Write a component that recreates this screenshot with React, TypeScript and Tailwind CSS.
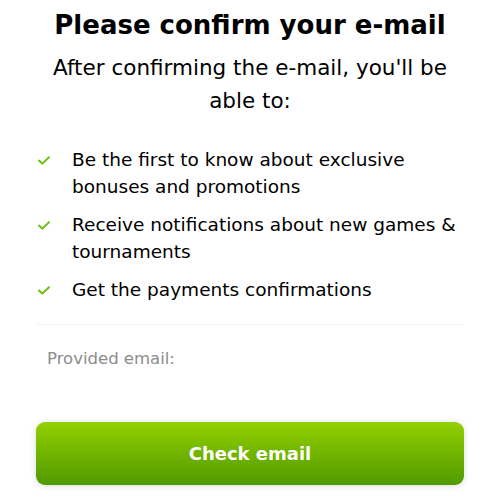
import React from 'react';

const items = [
  'Be the first to know about exclusive bonuses and promotions',
  'Receive notifications about new games & tournaments',
  'Get the payments confirmations',
];

const Check: React.FC = () => (
  <svg width="12" height="9" viewBox="0 0 12 9" className="shrink-0 mt-[10px]">
    <path d="M1 4.6 L4.3 7.6 L11 1.2" fill="none" stroke="#6cc20e" strokeWidth="2" strokeLinecap="round" strokeLinejoin="round" />
  </svg>
);

const App: React.FC = () => {
  return (
    <div className="w-[500px] h-[499px] bg-white px-9 pt-[8px] font-['DejaVu_Sans',sans-serif] text-black overflow-hidden">
      <h1 className="text-center text-[26px] leading-[34px] font-bold">Please confirm your e-mail</h1>
      <p className="mx-auto w-[410px] text-center text-[21.5px] leading-[33px] mt-[9px]">
        After confirming the e-mail, you'll be able to:
      </p>
      <ul className="mt-[29px] flex flex-col gap-[11px]">
        {items.map(text => (
          <li key={text} className="flex gap-[22px] pl-[2px] text-[18.5px] leading-[27px]">
            <Check />
            <span>{text}</span>
          </li>
        ))}
      </ul>
      <div className="mt-[21px] border-t border-gray-100" />
      <div className="mt-[22px] pl-[11px] text-[16.5px] text-[#8c8c8c]">Provided email:</div>
      <button className="mt-[50px] w-full h-[63px] rounded-[9px] bg-gradient-to-b from-[#93d000] to-[#4f9a00] text-white text-[18px] font-bold shadow-[0_1px_6px_rgba(0,0,0,0.15)]">
        Check email
      </button>
    </div>
  );
};

export default App;
